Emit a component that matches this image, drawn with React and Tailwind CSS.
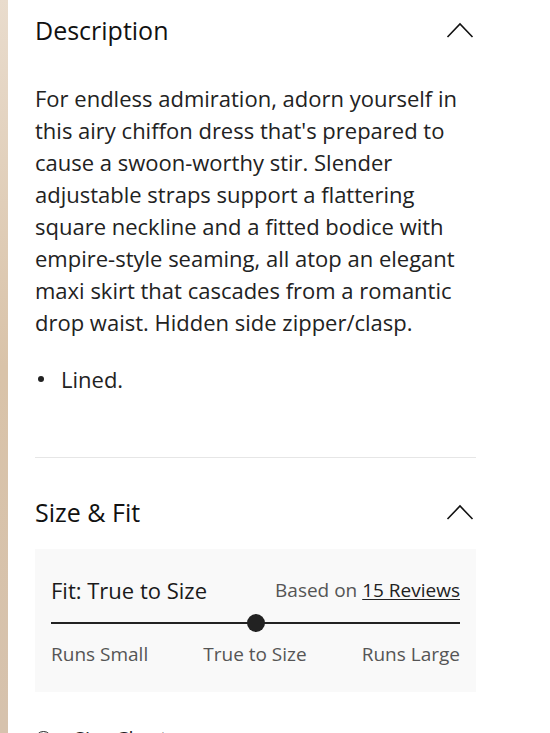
const font = { fontFamily: '"Open Sans", Lato, sans-serif' };

function SectionHeader({ title }) {
  return (
    <div className="flex items-center justify-between h-[30px]">
      <h2 className="text-[25px] leading-[30px] text-[#111]">{title}</h2>
      <svg width="28" height="16" viewBox="0 0 28 16" className="mr-[2px]">
        <path d="M1.5 15 L14 2 L26.5 15" fill="none" stroke="#111" strokeWidth="1.6" />
      </svg>
    </div>
  );
}

export default function App() {
  return (
    <div className="flex h-[733px] bg-white overflow-hidden" style={font}>
      <div className="w-[8px] shrink-0 bg-gradient-to-b from-[#e9dccd] via-[#d9c3a9] to-[#d6c2ad]" />
      <div className="w-[441px] ml-[27px] pt-[15px]">
        <SectionHeader title="Description" />
        <p className="mt-[37px] text-[22px] leading-[32px] text-[#222]">
          For endless admiration, adorn yourself in this airy chiffon dress that's prepared to cause a
          swoon-worthy stir. Slender adjustable straps support a flattering square neckline and a fitted
          bodice with empire-style seaming, all atop an elegant maxi skirt that cascades from a romantic
          drop waist. Hidden side zipper/clasp.
        </p>
        <ul className="mt-[25px] text-[22px] leading-[32px] text-[#222]">
          <li className="flex items-center">
            <span className="w-[6px] h-[6px] rounded-full bg-[#222] ml-[3px] mr-[17px]" />
            Lined.
          </li>
        </ul>
        <div className="mt-[62px] border-t border-[#e6e6e6]" />
        <div className="mt-[39px]">
          <SectionHeader title="Size &amp; Fit" />
        </div>
        <div className="mt-[22px] h-[143px] bg-[#f9f9f9] px-[16px] pt-[26px]">
          <div className="flex items-center justify-between h-[30px]">
            <span className="text-[22px] text-[#1a1a1a]">Fit: True to Size</span>
            <span className="text-[19px] text-[#555]">
              Based on <span className="underline underline-offset-2 text-[#222]">15 Reviews</span>
            </span>
          </div>
          <div className="relative mt-[17px] h-[2px] bg-[#222]">
            <span className="absolute left-1/2 top-1/2 -translate-x-1/2 -translate-y-1/2 w-[18px] h-[18px] rounded-full bg-[#222]" />
          </div>
          <div className="mt-[18px] flex items-center justify-between text-[19px] leading-[24px] text-[#555]">
            <span>Runs Small</span>
            <span>True to Size</span>
            <span>Runs Large</span>
          </div>
        </div>
        <div className="mt-[32px] flex items-center gap-[22px] text-[20px] text-[#222]">
          <span className="w-[17px] h-[17px] rounded-full border-[1.5px] border-[#222]" />
          <span>Size Chart</span>
        </div>
      </div>
    </div>
  );
}
